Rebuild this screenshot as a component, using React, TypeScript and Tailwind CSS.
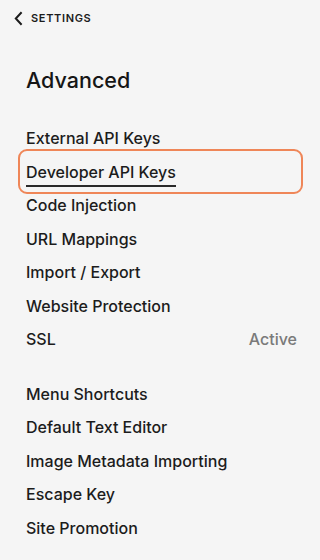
import React from "react";

const group1 = [
  "External API Keys",
  "Developer API Keys",
  "Code Injection",
  "URL Mappings",
  "Import / Export",
  "Website Protection",
  "SSL",
];
const group2 = [
  "Menu Shortcuts",
  "Default Text Editor",
  "Image Metadata Importing",
  "Escape Key",
  "Site Promotion",
];

function Row({ label }: { label: string }) {
  const selected = label === "Developer API Keys";
  return (
    <div className="relative flex h-[33.5px] items-center justify-between pl-[26px] pr-[23px]">
      {selected && (
        <div className="pointer-events-none absolute left-[18px] right-[17px] top-[-6px] bottom-[-6px] rounded-[9px] border-2 border-[#ef8658]" />
      )}
      <span className="relative text-[16px] font-medium text-[#1c1c1c]">
        {label}
        {selected && (
          <span className="absolute left-0 right-0 bottom-[-3px] h-[2px] bg-[#2a2a2a]" />
        )}
      </span>
      {label === "SSL" && (
        <span className="text-[16px] font-medium text-[#7a7a7a]">Active</span>
      )}
    </div>
  );
}

export default function App() {
  return (
    <div
      className="h-[560px] w-[320px] overflow-hidden bg-[#f5f5f5]"
      style={{ fontFamily: "Inter, 'Noto Sans', sans-serif" }}
    >
      <div className="flex h-[36px] items-center gap-[8px] pl-[14px]">
        <svg width="9" height="15" viewBox="0 0 9 15" fill="none">
          <path d="M7.6 1.2L1.8 7.5l5.8 6.3" stroke="#1c1c1c" strokeWidth="2" />
        </svg>
        <span className="text-[11px] font-semibold tracking-[0.06em] text-[#1c1c1c]">
          SETTINGS
        </span>
      </div>
      <div className="pl-[26px] pt-[28px] text-[21.5px] font-medium text-[#161616]">
        Advanced
      </div>
      <div className="mt-[25px]">
        {group1.map((l) => (
          <Row key={l} label={l} />
        ))}
      </div>
      <div className="mt-[21px]">
        {group2.map((l) => (
          <Row key={l} label={l} />
        ))}
      </div>
    </div>
  );
}
